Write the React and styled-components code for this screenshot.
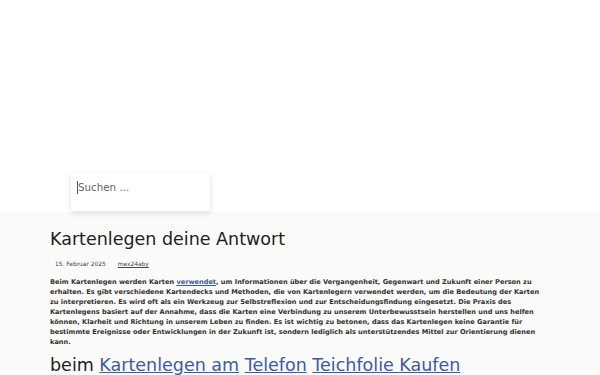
import React from "react";
import styled, { createGlobalStyle } from "styled-components";

const GlobalStyle = createGlobalStyle`
  html, body {
    margin: 0;
    padding: 0;
    background: #fafaf8;
    font-family: "DejaVu Sans", sans-serif;
    color: #222;
  }
`;

const Header = styled.header`
  background: #fff;
  height: 212px;
  display: flex;
  align-items: flex-end;
  padding-left: 71px;
  box-sizing: border-box;
`;

const SearchBox = styled.div`
  width: 139px;
  height: 38px;
  margin-bottom: 1px;
  background: #fff;
  box-shadow: 0 2px 6px rgba(0, 0, 0, 0.12);
  display: flex;
  align-items: flex-start;
  padding: 8px 0 0 6px;
  box-sizing: border-box;
  position: relative;
  z-index: 1;
`;

const SearchText = styled.span`
  font-size: 10.3px;
  color: #666;
  border-left: 1px solid #555;
  line-height: 13px;
`;

const Main = styled.main`
  padding: 15px 50px 0;
  max-width: 496px;
`;

const Title = styled.h1`
  margin: 0;
  font-size: 17.5px;
  font-weight: normal;
  line-height: 24px;
  color: #222;
`;

const Meta = styled.div`
  display: flex;
  gap: 12px;
  font-size: 5.9px;
  color: #444;
  margin: 10px 0 10px 5px;
`;

const Author = styled.a`
  color: #444;
  text-decoration: underline;
`;

const Body = styled.p`
  margin: 0;
  font-size: 6.6px;
  font-weight: bold;
  line-height: 10px;
  color: #333;
`;

const InlineLink = styled.a`
  color: #3b5ba8;
  text-decoration: underline;
`;

const SubHeading = styled.h2`
  margin: 8px 0 0;
  font-size: 17.5px;
  font-weight: normal;
  color: #222;
`;

const HeadLink = styled.a`
  color: #3b5ba8;
  text-decoration: underline;
`;

export default function App() {
  return (
    <>
      <GlobalStyle />
      <Header>
        <SearchBox>
          <SearchText>Suchen ...</SearchText>
        </SearchBox>
      </Header>
      <Main>
        <Title>Kartenlegen deine Antwort</Title>
        <Meta>
          <span>15. Februar 2025</span>
          <Author href="#">mex24aby</Author>
        </Meta>
        <Body>
          Beim Kartenlegen werden Karten <InlineLink href="#">verwendet</InlineLink>, um
          Informationen über die Vergangenheit, Gegenwart und Zukunft einer Person zu
          erhalten. Es gibt verschiedene Kartendecks und Methoden, die von Kartenlegern
          verwendet werden, um die Bedeutung der Karten zu interpretieren. Es wird oft als
          ein Werkzeug zur Selbstreflexion und zur Entscheidungsfindung eingesetzt. Die
          Praxis des Kartenlegens basiert auf der Annahme, dass die Karten eine Verbindung
          zu unserem Unterbewusstsein herstellen und uns helfen können, Klarheit und
          Richtung in unserem Leben zu finden. Es ist wichtig zu betonen, dass das
          Kartenlegen keine Garantie für bestimmte Ereignisse oder Entwicklungen in der
          Zukunft ist, sondern lediglich als unterstützendes Mittel zur Orientierung dienen
          kann.
        </Body>
        <SubHeading>
          beim <HeadLink href="#">Kartenlegen am</HeadLink>{" "}
          <HeadLink href="#">Telefon</HeadLink>{" "}
          <HeadLink href="#">Teichfolie Kaufen</HeadLink>
        </SubHeading>
      </Main>
    </>
  );
}
